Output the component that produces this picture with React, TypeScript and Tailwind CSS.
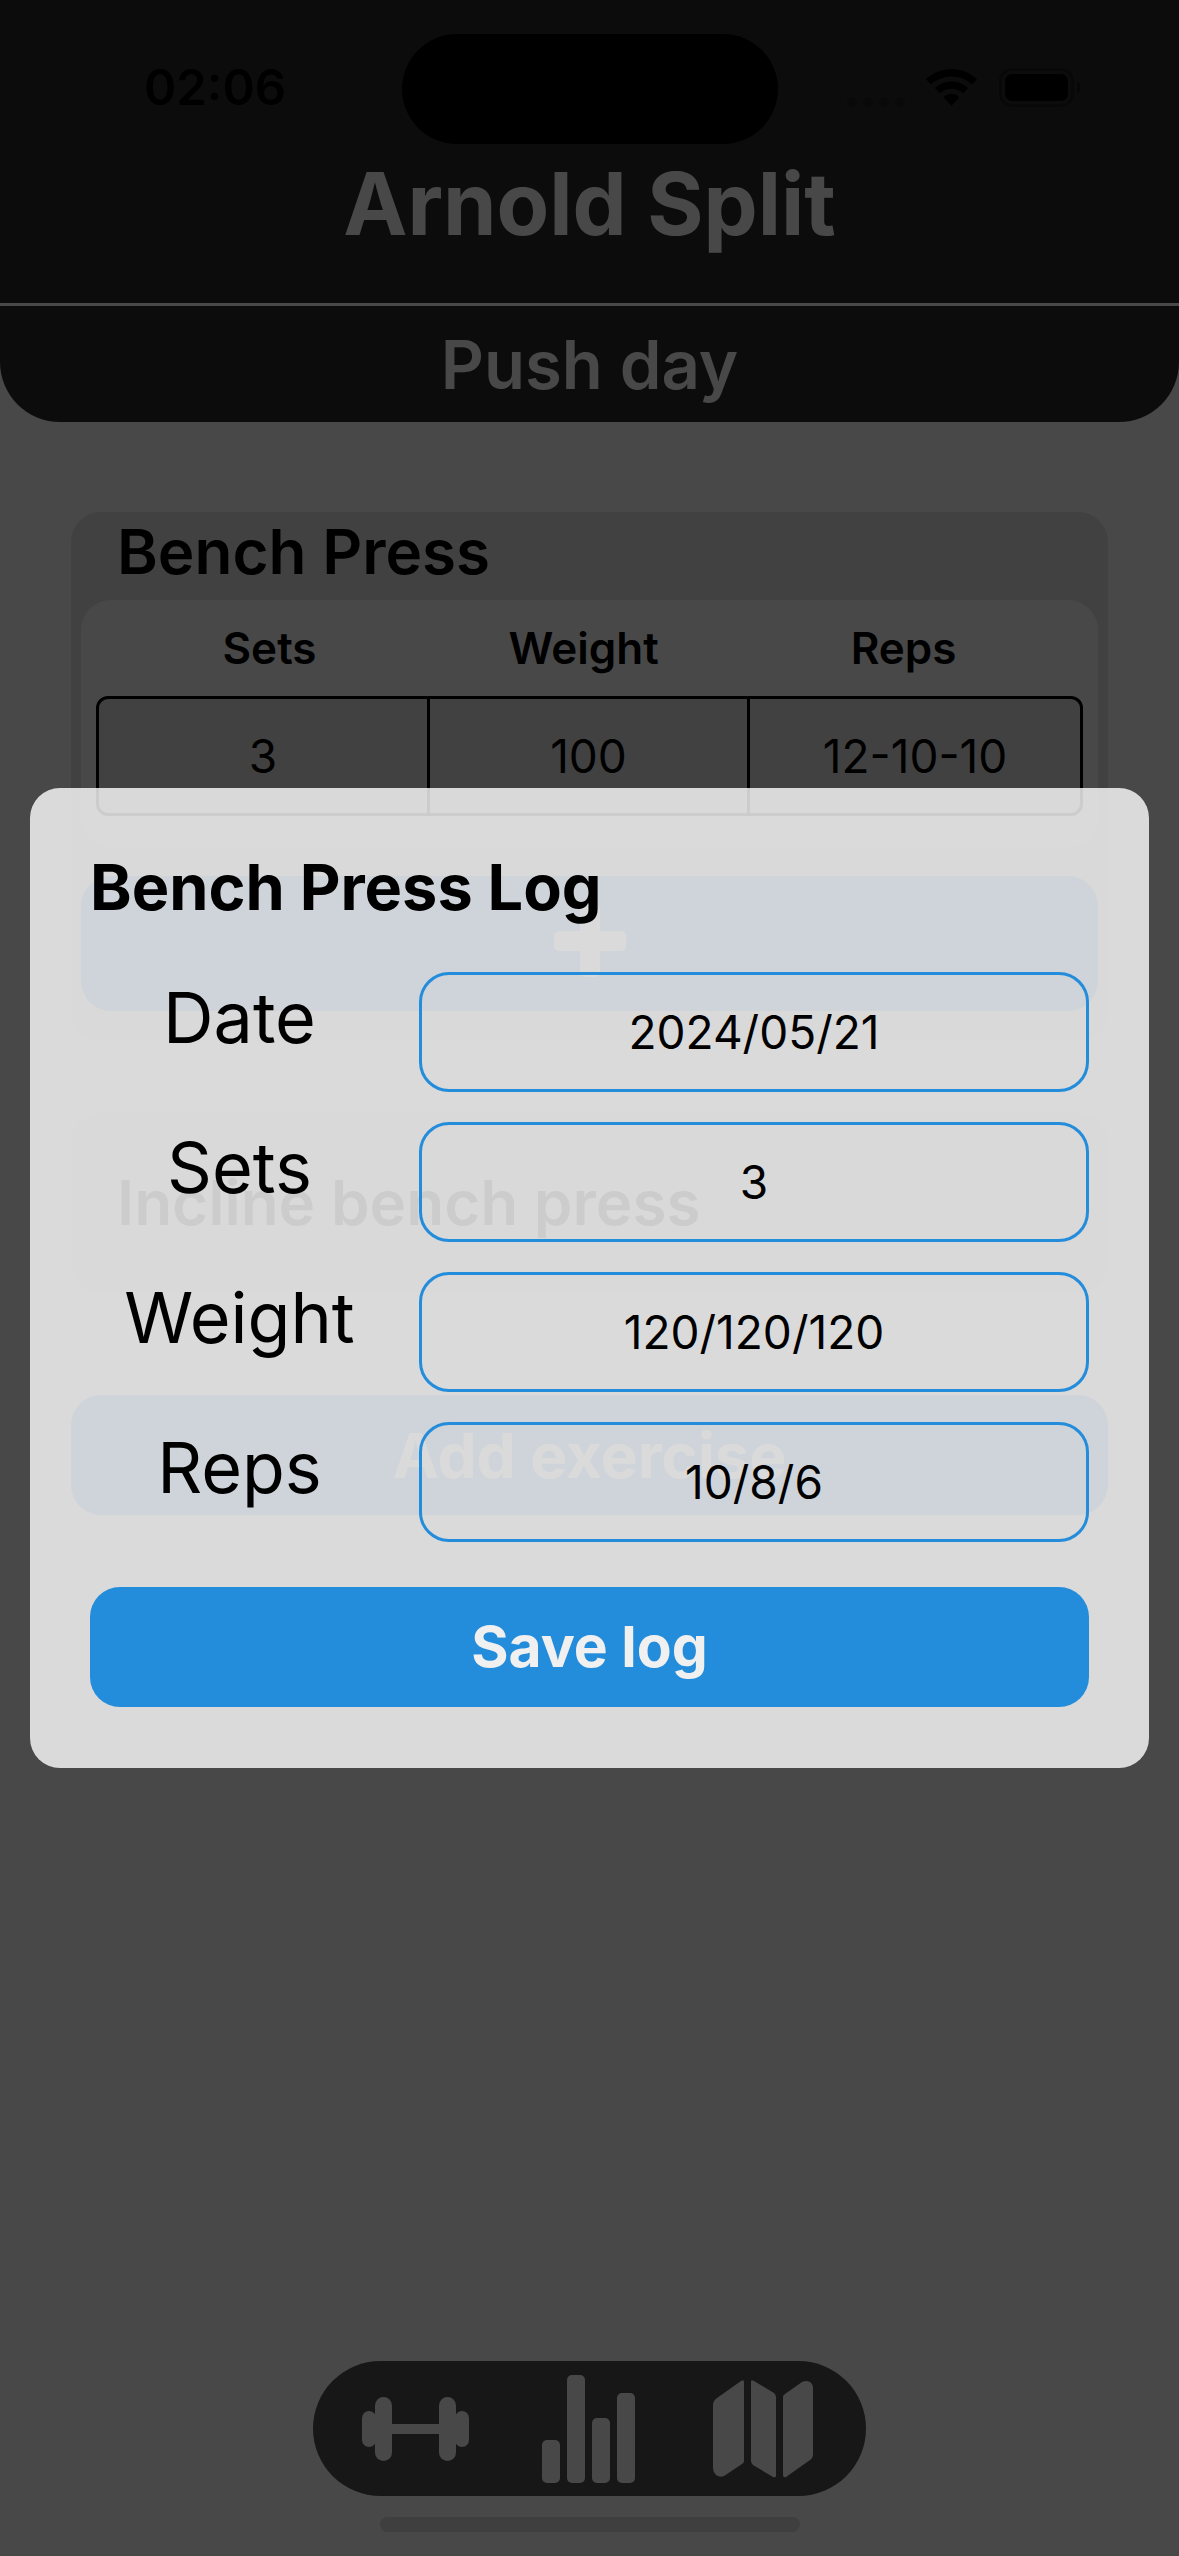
import React from "react";

const COLUMNS = ["Sets", "Weight", "Reps"];
const FIELDS = [
  { id: "date", label: "Date", value: "2024/05/21" },
  { id: "sets", label: "Sets", value: "3" },
  { id: "weight", label: "Weight", value: "120/120/120" },
  { id: "reps", label: "Reps", value: "10/8/6" },
];

function StatusBar() {
  return (
    <div className="grid grid-cols-[1fr_376px_1fr] items-center pt-[34px] text-left text-black">
      <div className="pb-0.5 pl-[144px] text-[49px] leading-[60px] font-semibold">02:06</div>
      <div className="h-[110px] rounded-full bg-black" />
      <div className="flex items-center pl-[68px]">
        <svg width="240" height="46" viewBox="0 0 240 46" aria-hidden="true">
          <g fill="#000" opacity="0.25">
            <circle cx="6" cy="36" r="5" />
            <circle cx="22" cy="36" r="5" />
            <circle cx="38" cy="36" r="5" />
            <circle cx="54" cy="36" r="5" />
          </g>
          <g transform="translate(80 3)">
            <path d="M25.5 0C35.4 0 44.4 3.9 51 10.3L46 15.5C40.7 10.5 33.5 7.5 25.5 7.5C17.5 7.5 10.3 10.5 5 15.5L0 10.3C6.6 3.9 15.6 0 25.5 0Z" fill="#000" />
            <path d="M25.5 12.5C32 12.5 37.9 15 42.3 19.1L37.2 24.3C34.1 21.5 30 19.8 25.5 19.8C21 19.8 16.9 21.5 13.8 24.3L8.7 19.1C13.1 15 19 12.5 25.5 12.5Z" fill="#000" />
            <path d="M25.5 25C28.5 25 31.3 26.2 33.4 28.2L25.5 37L17.6 28.2C19.7 26.2 22.5 25 25.5 25Z" fill="#000" />
          </g>
          <rect x="154.500" y="3.500" width="72" height="36" rx="11" fill="none" stroke="#000" strokeWidth="3" opacity="0.35" />
          <rect x="159" y="8" width="63" height="27" rx="7" fill="#000" />
          <path d="M231 15.500c5 2 5 10 0 12z" fill="#000" opacity="0.4" />
        </svg>
      </div>
    </div>
  );
}

function ExerciseTable() {
  return (
    <table className="block rounded-[30px] bg-[#f0f0f0] px-[15px] pb-[31px]">
      <thead className="block">
        <tr className="flex h-24 items-center justify-center gap-48 text-[44px]">
          {COLUMNS.map((name) => (
            <th key={name} scope="col" className="font-semibold">{name}</th>
          ))}
        </tr>
      </thead>
      <tbody className="block">
        <tr className="flex h-[120px] items-stretch divide-x-3 divide-black rounded-xl border-3 border-black bg-[#d9d9d9] text-[46px]">
          <td className="flex flex-[331] items-center justify-center">3</td>
          <td className="flex flex-[320] items-center justify-center">100</td>
          <td className="flex flex-[333] items-center justify-center">12-10-10</td>
        </tr>
      </tbody>
    </table>
  );
}

function TabBar() {
  return (
    <nav className="flex h-[135px] items-center gap-[72px] rounded-full bg-[#4d4d4d] pr-[52px] pl-12">
      <button aria-label="Workouts">
        <svg width="109" height="64" viewBox="-1 0 109 64" fill="#f0f0f0">
          <rect x="0" y="14" width="14" height="36" rx="7" />
          <rect x="93" y="14" width="14" height="36" rx="7" />
          <rect x="13" y="0" width="17" height="64" rx="8.500" />
          <rect x="77" y="0" width="17" height="64" rx="8.500" />
          <rect x="28" y="27" width="51" height="10" />
        </svg>
      </button>
      <button aria-label="Statistics">
        <svg width="99" height="108" viewBox="0 0 99 108" fill="#f0f0f0">
          <rect x="0" y="65" width="18" height="43" rx="5" />
          <rect x="25" y="0" width="18" height="108" rx="5" />
          <rect x="50" y="43" width="18" height="65" rx="5" />
          <rect x="75" y="18" width="18" height="90" rx="5" />
        </svg>
      </button>
      <button aria-label="Plans">
        <svg width="101" height="98" viewBox="0 0 101 98" fill="#f0f0f0">
          <path d="M4 18L28 1Q31 -1 31 2V81Q31 83 29 84L11 96Q7 98 3 95Q0 92 0 88V25Q0 21 4 18Z" />
          <path d="M38 2Q38 -1 41 1L61 13Q63 15 63 17V96Q63 98 60 97L40 85Q38 83 38 81Z" />
          <path d="M70 17Q70 15 72 14L89 2Q93 0 97 2Q100 4 100 8V74Q100 78 97 80L73 97Q70 98 70 95Z" />
        </svg>
      </button>
    </nav>
  );
}

function LogDialog() {
  return (
    <form
      role="dialog"
      aria-labelledby="log-title"
      onSubmit={(event) => event.preventDefault()}
      className="mx-[30px] mt-[788px] h-fit min-w-0 flex-1 rounded-[30px] bg-white/80 px-[60px] pt-[60px] pb-[61px]"
    >
      <h2 id="log-title" className="text-[63px] leading-[78px] font-bold">Bench Press Log</h2>
      <div className="mt-[46px] flex flex-col gap-[30px]">
        {FIELDS.map((field) => (
          <div key={field.id} className="flex gap-[30px]">
            <label htmlFor={field.id} className="w-[299px] text-center text-[70px] leading-[92px]">
              {field.label}
            </label>
            <input
              id={field.id}
              defaultValue={field.value}
              className="h-[120px] min-w-0 flex-1 rounded-[30px] border-3 border-[#238cdb] text-center text-[46px]"
            />
          </div>
        ))}
      </div>
      <button className="mt-[45px] h-[120px] w-full rounded-[30px] bg-[#238cdb] text-[57px] font-bold text-[#f0f0f0]">
        Save log
      </button>
    </form>
  );
}

export default function App() {
  return (
    <div className="relative flex min-h-screen flex-col bg-[#f0f0f0] font-['Inter',sans-serif] text-black">
      <header className="rounded-b-[60px] bg-[#2b2b2b] text-center text-[#f0f0f0]">
        <StatusBar />
        <h1 className="mt-2 h-[151px] text-[86px] leading-[104px] font-bold">Arnold Split</h1>
        <p className="h-[119px] border-t-3 border-[#f0f0f0] text-[67px] leading-[118px] font-semibold">Push day</p>
      </header>

      <main className="flex flex-1 flex-col px-[71px] pt-[90px]">
        <section className="rounded-[30px] bg-[#d9d9d9] px-2.5 pb-[30px]">
          <h2 className="h-[88px] pl-9 text-[62px] leading-[80px] font-semibold">Bench Press</h2>
          <ExerciseTable />
          <button
            aria-label="Add log"
            className="mt-[29px] flex h-[135px] w-full items-center justify-center rounded-[30px] bg-[#238cdb] pb-1.5"
          >
            <svg width="72" height="72" viewBox="0 0 72 72" fill="#f0f0f0">
              <rect x="0" y="26" width="72" height="20" rx="5" />
              <rect x="26" y="0" width="20" height="72" rx="5" />
            </svg>
          </button>
        </section>
        <section className="mt-[72px] h-[180px] rounded-[30px] bg-[#d9d9d9] px-[46px]">
          <h2 className="text-[62px] leading-[180px] font-semibold">Incline bench press</h2>
        </section>
        <button className="mt-[102px] h-[120px] rounded-[30px] bg-[#238cdb] text-[62px] font-bold text-[#f0f0f0]">
          Add exercise
        </button>
      </main>

      <footer className="flex flex-col items-center gap-[21px] pb-6">
        <TabBar />
        <div className="h-[15px] w-[420px] rounded-full bg-[#d2d2d2]" />
      </footer>

      <div className="absolute inset-0 flex bg-black/70">
        <LogDialog />
      </div>
    </div>
  );
}
